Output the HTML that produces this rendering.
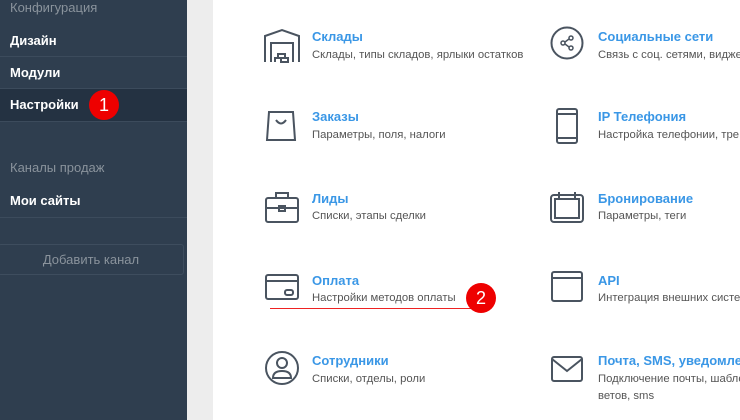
<!DOCTYPE html>
<html><head><meta charset="utf-8"><style>
*{margin:0;padding:0;box-sizing:border-box}
body{width:740px;height:420px;overflow:hidden;background:#fff;font-family:"Liberation Sans","DejaVu Sans",sans-serif;position:relative}
.sb{position:absolute;left:0;top:0;width:187px;height:420px;background:#2f3e4f}
.strip{position:absolute;left:187px;top:0;width:26px;height:420px;background:#ededed}
.it{position:absolute;left:0;width:187px;color:#fff;font-size:13px;font-weight:bold;padding-left:10px}
.hd{position:absolute;left:10px;color:#8a939c;font-size:13px}
.dv{position:absolute;left:0;width:187px;height:1px;background:#3c4b5c}
.badge{position:absolute;width:30px;height:30px;border-radius:50%;background:#e00;color:#fff;font-size:18px;text-align:center;line-height:30px}
.t{position:absolute;color:#3a97e6;font-size:13px;font-weight:bold;white-space:nowrap}
.s{position:absolute;color:#555;font-size:11.3px;white-space:nowrap}
svg{position:absolute}
</style></head><body>
<div class="sb"></div><div class="strip"></div>
<div class="hd" style="top:0">Конфигурация</div>
<div class="it" style="top:33px">Дизайн</div>
<div class="dv" style="top:56px"></div>
<div class="it" style="top:65px">Модули</div>
<div class="dv" style="top:88px"></div>
<div class="it" style="top:89px;height:32px;background:#243242;line-height:31px">Настройки</div>
<div class="badge" style="left:89px;top:90px">1</div>
<div class="dv" style="top:121px"></div>
<div class="hd" style="top:160px">Каналы продаж</div>
<div class="it" style="top:193px">Мои сайты</div>
<div class="dv" style="top:217px"></div>
<div style="position:absolute;left:-2px;top:244px;width:186px;height:31px;border:1px solid #3e4d5e;border-radius:3px;color:#8a939c;font-size:13px;text-align:center;line-height:29px">Добавить канал</div>

<svg style="left:263px;top:28px" width="38" height="36" viewBox="0 0 38 36" fill="none" stroke="#4a5460" stroke-width="2"><path d="M2 34V8L19 2L36 8V34"/><path d="M8 34V15H30V34"/><path d="M12 34V30H18V34H25V30H12M15 30V26H22V30"/></svg>
<div class="t" style="left:312px;top:29px">Склады</div><div class="s" style="left:312px;top:49px">Склады, типы складов, ярлыки остатков</div>

<svg style="left:265px;top:110px" width="32" height="32" viewBox="0 0 32 32" fill="none" stroke="#4a5460" stroke-width="2"><path d="M4 2H28L30 30H2Z"/><path d="M11 10Q16 17 21 10"/></svg>
<div class="t" style="left:312px;top:109px">Заказы</div><div class="s" style="left:312px;top:129px">Параметры, поля, налоги</div>

<svg style="left:264px;top:190px" width="36" height="34" viewBox="0 0 36 34" fill="none" stroke="#4a5460" stroke-width="2"><rect x="2" y="8" width="32" height="24" rx="2"/><path d="M12 8V3H24V8M2 18H34"/><rect x="15" y="16" width="6" height="5"/></svg>
<div class="t" style="left:312px;top:191px">Лиды</div><div class="s" style="left:312px;top:210px">Списки, этапы сделки</div>

<svg style="left:264px;top:273px" width="36" height="28" viewBox="0 0 36 28" fill="none" stroke="#4a5460" stroke-width="2"><rect x="2" y="2" width="32" height="24" rx="2"/><path d="M2 8H34"/><rect x="21" y="17" width="8" height="5" rx="2"/></svg>
<div class="t" style="left:312px;top:273px">Оплата</div><div class="s" style="left:312px;top:292px">Настройки методов оплаты</div>
<div style="position:absolute;left:270px;top:308px;width:206px;height:1px;background:#e22"></div>
<div class="badge" style="left:466px;top:283px">2</div>

<svg style="left:264px;top:350px" width="36" height="36" viewBox="0 0 36 36" fill="none" stroke="#4a5460" stroke-width="2"><circle cx="18" cy="18" r="16"/><circle cx="18" cy="13" r="5"/><path d="M9 28Q9 21 18 21Q27 21 27 28Z"/></svg>
<div class="t" style="left:312px;top:353px">Сотрудники</div><div class="s" style="left:312px;top:373px">Списки, отделы, роли</div>

<svg style="left:550px;top:26px" width="34" height="34" viewBox="0 0 34 34" fill="none" stroke="#4a5460" stroke-width="2"><circle cx="17" cy="17" r="15.5"/><g stroke-width="1.5"><circle cx="13" cy="17" r="2"/><circle cx="21" cy="12" r="2"/><circle cx="21" cy="22" r="2"/><path d="M15 16L19 13M15 18L19 21"/></g></svg>
<div class="t" style="left:598px;top:29px">Социальные сети</div><div class="s" style="left:598px;top:49px">Связь с соц. сетями, виджеты</div>

<svg style="left:555px;top:107px" width="24" height="38" viewBox="0 0 24 38" fill="none" stroke="#4a5460" stroke-width="2"><rect x="2" y="2" width="20" height="34" rx="2"/><path d="M2 7H22M2 31H22"/></svg>
<div class="t" style="left:598px;top:109px">IP Телефония</div><div class="s" style="left:598px;top:129px">Настройка телефонии, тре</div>

<svg style="left:549px;top:190px" width="36" height="34" viewBox="0 0 36 34" fill="none" stroke="#4a5460" stroke-width="2"><rect x="2" y="5" width="32" height="27" rx="3"/><rect x="6" y="9" width="24" height="19"/><path d="M10 2V9M26 2V9"/></svg>
<div class="t" style="left:598px;top:191px">Бронирование</div><div class="s" style="left:598px;top:210px">Параметры, теги</div>

<svg style="left:550px;top:270px" width="34" height="34" viewBox="0 0 34 34" fill="none" stroke="#4a5460" stroke-width="2"><rect x="2" y="2" width="30" height="29" rx="2"/><path d="M2 8H32"/></svg>
<div class="t" style="left:598px;top:273px">API</div><div class="s" style="left:598px;top:292px">Интеграция внешних систем</div>

<svg style="left:550px;top:355px" width="34" height="28" viewBox="0 0 34 28" fill="none" stroke="#4a5460" stroke-width="2"><rect x="2" y="2" width="30" height="24" rx="2"/><path d="M2 4L17 16L32 4"/></svg>
<div class="t" style="left:598px;top:353px">Почта, SMS, уведомления</div><div class="s" style="left:598px;top:373px">Подключение почты, шаблонов</div><div class="s" style="left:598px;top:390px">ветов, sms</div>
</body></html>
